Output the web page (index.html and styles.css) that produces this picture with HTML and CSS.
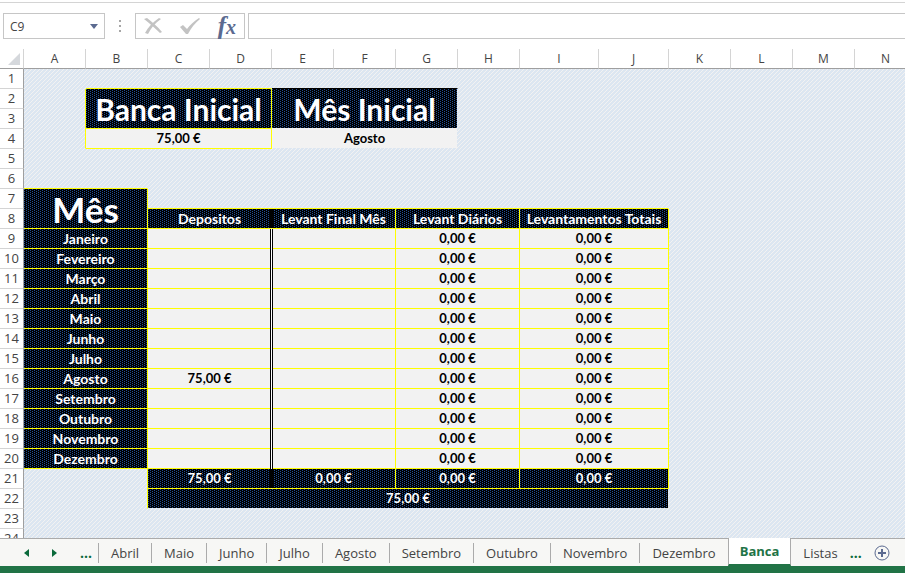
FILE: index.html
```html
<!DOCTYPE html>
<html lang="pt">
<head>
    <meta charset="UTF-8">
    <meta name="viewport" content="width=device-width, initial-scale=1.0">
    <title>Banca</title>
    <link rel="stylesheet" href="styles.css">
</head>
<body>
    <!-- Formula bar -->
    <header class="formula-bar">
        <div class="name-box">
            <input type="text" value="C9" aria-label="Name box">
            <button type="button" aria-label="Open names">
                <svg width="8" height="5" viewBox="0 0 8 5"><path d="M0 0h8L4 5z" fill="#5b6a90"/></svg>
            </button>
        </div>
        <svg class="grip" width="2" height="12" viewBox="0 0 2 12" fill="#a6a6a6"><path d="M0 0h2v2H0zM0 5h2v2H0zM0 10h2v2H0z"/></svg>
        <div class="formula-actions">
            <button type="button" aria-label="Cancel">
                <svg width="18" height="16" viewBox="0 0 18 16" fill="#c3c3c3"><path d="M0 1l3-1c5 4 10 8 15 14l-2 1C11 10 6 6 0 1z"/><path d="M15 0l2 1C11 5 7 10 4 16l-3-1C4 9 9 4 15 0z"/></svg>
            </button>
            <button type="button" aria-label="Enter">
                <svg width="20" height="16" viewBox="0 0 20 16"><path d="M0 9l3-2 4 4C10 7 14 3 19 0l1 1C15 5 11 10 8 16H6z" fill="#c3c3c3"/></svg>
            </button>
            <button type="button" class="fx" aria-label="Insert function">f<span>x</span></button>
        </div>
        <input type="text" class="formula-input" aria-label="Formula">
    </header>

    <!-- Sheet -->
    <main class="sheet">
        <table class="grid">
            <colgroup>
                <col class="col-head">
                <col><col><col><col><col><col><col><col>
                <col class="col-i"><col class="col-j">
                <col><col><col><col>
            </colgroup>
            <thead>
                <tr>
                    <th class="corner"><svg width="12" height="12" viewBox="0 0 12 12"><path d="M12 0v12H0z" fill="#d5d8dc"/></svg></th>
                    <th>A</th><th>B</th><th>C</th><th>D</th><th>E</th><th>F</th><th>G</th><th>H</th><th>I</th><th>J</th><th>K</th><th>L</th><th>M</th><th>N</th>
                </tr>
            </thead>
            <tbody>
                <tr><th>1</th><td></td><td class="line-b" colspan="3"></td><td class="navy-b" colspan="3"></td><td colspan="7"></td></tr>
                <tr><th>2</th><td class="line-r" rowspan="3"></td><td class="navy title line-b line-r" colspan="3" rowspan="2">Banca Inicial</td><td class="navy title light-b" colspan="3" rowspan="2">Mês Inicial</td><td colspan="7"></td></tr>
                <tr><th>3</th><td colspan="7"></td></tr>
                <tr><th>4</th><td class="light line-b line-r" colspan="3">75,00 €</td><td class="light" colspan="3">Agosto</td><td colspan="7"></td></tr>
                <tr><th>5</th><td colspan="14"></td></tr>
                <tr><th>6</th><td class="line-b" colspan="2"></td><td colspan="12"></td></tr>
                <tr><th>7</th><td class="navy month-title line-b line-r" colspan="2" rowspan="2">Mês</td><td class="line-b" colspan="8"></td><td colspan="4"></td></tr>
                <tr><th>8</th><td class="navy line-b split" colspan="2">Depositos</td><td class="navy line-b line-r" colspan="2">Levant Final Mês</td><td class="navy line-b line-r" colspan="2">Levant Diários</td><td class="navy line-b line-r" colspan="2">Levantamentos Totais</td><td colspan="4"></td></tr>
                <tr class="entry"><th>9</th><td class="navy" colspan="2">Janeiro</td><td class="light split" colspan="2"></td><td class="light" colspan="2"></td><td class="light" colspan="2">0,00 €</td><td class="light" colspan="2">0,00 €</td><td colspan="4"></td></tr>
                <tr class="entry"><th>10</th><td class="navy" colspan="2">Fevereiro</td><td class="light split" colspan="2"></td><td class="light" colspan="2"></td><td class="light" colspan="2">0,00 €</td><td class="light" colspan="2">0,00 €</td><td colspan="4"></td></tr>
                <tr class="entry"><th>11</th><td class="navy" colspan="2">Março</td><td class="light split" colspan="2"></td><td class="light" colspan="2"></td><td class="light" colspan="2">0,00 €</td><td class="light" colspan="2">0,00 €</td><td colspan="4"></td></tr>
                <tr class="entry"><th>12</th><td class="navy" colspan="2">Abril</td><td class="light split" colspan="2"></td><td class="light" colspan="2"></td><td class="light" colspan="2">0,00 €</td><td class="light" colspan="2">0,00 €</td><td colspan="4"></td></tr>
                <tr class="entry"><th>13</th><td class="navy" colspan="2">Maio</td><td class="light split" colspan="2"></td><td class="light" colspan="2"></td><td class="light" colspan="2">0,00 €</td><td class="light" colspan="2">0,00 €</td><td colspan="4"></td></tr>
                <tr class="entry"><th>14</th><td class="navy" colspan="2">Junho</td><td class="light split" colspan="2"></td><td class="light" colspan="2"></td><td class="light" colspan="2">0,00 €</td><td class="light" colspan="2">0,00 €</td><td colspan="4"></td></tr>
                <tr class="entry"><th>15</th><td class="navy" colspan="2">Julho</td><td class="light split" colspan="2"></td><td class="light" colspan="2"></td><td class="light" colspan="2">0,00 €</td><td class="light" colspan="2">0,00 €</td><td colspan="4"></td></tr>
                <tr class="entry"><th>16</th><td class="navy" colspan="2">Agosto</td><td class="light split" colspan="2">75,00 €</td><td class="light" colspan="2"></td><td class="light" colspan="2">0,00 €</td><td class="light" colspan="2">0,00 €</td><td colspan="4"></td></tr>
                <tr class="entry"><th>17</th><td class="navy" colspan="2">Setembro</td><td class="light split" colspan="2"></td><td class="light" colspan="2"></td><td class="light" colspan="2">0,00 €</td><td class="light" colspan="2">0,00 €</td><td colspan="4"></td></tr>
                <tr class="entry"><th>18</th><td class="navy" colspan="2">Outubro</td><td class="light split" colspan="2"></td><td class="light" colspan="2"></td><td class="light" colspan="2">0,00 €</td><td class="light" colspan="2">0,00 €</td><td colspan="4"></td></tr>
                <tr class="entry"><th>19</th><td class="navy" colspan="2">Novembro</td><td class="light split" colspan="2"></td><td class="light" colspan="2"></td><td class="light" colspan="2">0,00 €</td><td class="light" colspan="2">0,00 €</td><td colspan="4"></td></tr>
                <tr class="entry"><th>20</th><td class="navy" colspan="2">Dezembro</td><td class="light split" colspan="2"></td><td class="light" colspan="2"></td><td class="light" colspan="2">0,00 €</td><td class="light" colspan="2">0,00 €</td><td colspan="4"></td></tr>
                <tr class="totals"><th>21</th><td class="line-r" colspan="2" rowspan="2"></td><td class="navy line-b split" colspan="2">75,00 €</td><td class="navy line-b line-r" colspan="2">0,00 €</td><td class="navy line-b line-r" colspan="2">0,00 €</td><td class="navy line-b line-r" colspan="2">0,00 €</td><td colspan="4"></td></tr>
                <tr class="totals"><th>22</th><td class="navy" colspan="8">75,00 €</td><td colspan="4"></td></tr>
                <tr><th>23</th><td colspan="14"></td></tr>
                <tr><th>24</th><td colspan="14"></td></tr>
            </tbody>
        </table>
    </main>

    <!-- Sheet tabs -->
    <nav class="tab-bar">
        <div class="tab-scroll">
            <button type="button" aria-label="Previous sheet"><svg width="5" height="8" viewBox="0 0 5 8"><path d="M5 0v8L0 4z" fill="#0b6a3b"/></svg></button>
            <button type="button" aria-label="Next sheet"><svg width="5" height="8" viewBox="0 0 5 8"><path d="M0 0v8l5-4z" fill="#0b6a3b"/></svg></button>
            <button type="button" class="more">...</button>
        </div>
        <a href="#abril">Abril</a>
        <a href="#maio">Maio</a>
        <a href="#junho">Junho</a>
        <a href="#julho">Julho</a>
        <a href="#agosto">Agosto</a>
        <a href="#setembro">Setembro</a>
        <a href="#outubro">Outubro</a>
        <a href="#novembro">Novembro</a>
        <a href="#dezembro">Dezembro</a>
        <a href="#banca" class="active">Banca</a>
        <a href="#listas">Listas</a>
        <button type="button" class="more">...</button>
        <button type="button" class="add" aria-label="New sheet">
            <svg width="16" height="16" viewBox="0 0 16 16" fill="none" stroke="#5b6a90"><circle cx="8" cy="8" r="7"/><path d="M8 4v8M4 8h8" stroke-width="2"/></svg>
        </button>
    </nav>
    <footer class="status-bar"></footer>
</body>
</html>
```
FILE: styles.css
```css
* {
    margin: 0;
    padding: 0;
    box-sizing: border-box;
}

:root {
    --line: #ffff00;
    --light: #f2f2f2;
    --green: #217346;
    --ui-font: "Open Sans", "Noto Sans", sans-serif;
    --cell-font: Lato, "Open Sans", sans-serif;
    --hatch: url("data:image/svg+xml,%3Csvg xmlns='http://www.w3.org/2000/svg' width='4' height='4' shape-rendering='crispEdges'%3E%3Crect width='4' height='4' fill='%23dce6f1'/%3E%3Cpath d='M3 0h1v1H3zM2 1h1v1H2zM1 2h1v1H1zM0 3h1v1H0z' fill='%23f2f2f2'/%3E%3C/svg%3E");
    --dots: url("data:image/svg+xml,%3Csvg xmlns='http://www.w3.org/2000/svg' width='4' height='4' shape-rendering='crispEdges'%3E%3Crect width='4' height='4' fill='%23000'/%3E%3Cpath d='M0 0h1v1H0zM2 1h1v1H2zM0 2h1v1H0zM2 3h1v1H2z' fill='%231f4e96'/%3E%3C/svg%3E");
}

body {
    height: 100vh;
    display: flex;
    flex-direction: column;
    overflow: hidden;
    font-family: var(--ui-font);
    background: #fff;
}

button {
    border: 0;
    background: none;
    font-family: inherit;
}

/* Formula bar */
.formula-bar {
    flex: none;
    display: flex;
    align-items: center;
    margin-top: 2px;
    padding: 10px 0 10px 3px;
    border-top: 1px solid #d4d4d4;
}

.name-box,
.formula-actions,
.formula-input {
    height: 26px;
    border: 1px solid #c6c6c6;
    background: #fff;
}

.name-box {
    display: flex;
    width: 102px;
}

.name-box input {
    flex: 1;
    min-width: 0;
    padding-left: 6px;
    border: 0;
    font: 12px var(--ui-font);
    color: #444;
}

.name-box button {
    width: 20px;
    padding-bottom: 4px;
}

.grip {
    margin: 0 14px;
}

.formula-actions {
    display: flex;
    align-items: center;
    justify-content: space-between;
    width: 110px;
    padding: 0 8px;
    margin-right: 3px;
}

.formula-actions button {
    display: flex;
}

.formula-actions .fx {
    display: block;
    font: italic bold 25px/24px "Liberation Serif", serif;
    color: #5b6a90;
}

.fx span {
    font-size: 20px;
}

.formula-input {
    flex: 1;
    min-width: 0;
    border-right: 0;
    padding: 0 8px;
    font: 12px var(--ui-font);
}

/* Sheet */
.sheet {
    flex: 1;
    min-height: 0;
    overflow: hidden;
    background: var(--hatch);
}

.grid {
    width: 917px;
    table-layout: fixed;
    border-collapse: separate;
    border-spacing: 0;
}

.grid col {
    width: 62px;
}

.grid .col-head {
    width: 24px;
}

.grid .col-i {
    width: 79px;
}

.grid .col-j {
    width: 70px;
}

.grid th {
    height: 20px;
    background: #fff;
    font-size: 12px;
    line-height: 19px;
    font-weight: 400;
    color: #444;
    white-space: nowrap;
}

.grid thead th {
    border-right: 1px solid #d4d4d4;
    border-bottom: 1px solid #9f9f9f;
}

.grid .corner {
    padding-left: 8px;
}

.corner svg {
    display: block;
}

.grid tbody th {
    border-right: 1px solid #9f9f9f;
    border-bottom: 1px solid #d4d4d4;
    font-size: 13px;
}

.grid td {
    height: 20px;
    border-right: 1px solid transparent;
    border-bottom: 1px solid transparent;
    background-clip: padding-box;
    font-family: var(--cell-font);
    font-size: 13px;
    line-height: 19px;
    font-weight: 700;
    text-align: center;
    white-space: nowrap;
    color: #000;
}

.grid .navy {
    background-image: var(--dots);
    font-size: 14px;
    color: #fff;
}

.grid .totals .navy {
    font-size: 13px;
}

.grid .light {
    background-color: var(--light);
}

.grid .title {
    font-size: 30px;
    line-height: 38px;
}

.grid .month-title {
    font-size: 35px;
    line-height: 38px;
}

/* Cell borders */
.grid .line-r,
.grid .entry td:not(:last-child) {
    border-right-color: var(--line);
}

.grid .line-b,
.grid .entry td:not(:last-child) {
    border-bottom-color: var(--line);
}

.grid .navy-b {
    border-bottom-color: #000;
}

.grid .light-b {
    border-bottom-color: var(--light);
}

/* Double line between deposits and withdrawals */
.grid .split {
    position: relative;
}

.split::after {
    content: "";
    position: absolute;
    top: 0;
    right: -2px;
    bottom: -1px;
    width: 1px;
    border: solid #000;
    border-width: 0 1px;
    background: #fff;
}

.navy.split::after {
    bottom: 0;
    background: #000;
}

/* Sheet tabs */
.tab-bar {
    flex: none;
    display: flex;
    align-items: center;
    height: 28px;
    border-top: 1px solid #ababab;
    background: #f7f7f5;
}

.tab-scroll {
    display: flex;
    align-items: center;
    width: 98px;
    padding-left: 24px;
    gap: 23px;
}

.tab-bar button {
    display: flex;
}

.tab-bar a {
    padding: 0 12px;
    border-left: 1px solid #ababab;
    font-size: 13px;
    line-height: 20px;
    color: #444;
    text-decoration: none;
}

.tab-bar .active {
    align-self: stretch;
    margin-top: -1px;
    padding: 0 11px;
    border-right: 1px solid #ababab;
    border-bottom: 2px solid var(--green);
    background: #fff;
    line-height: 26px;
    font-weight: 700;
    color: var(--green);
}

.tab-bar .active + a {
    border-left: 0;
}

.tab-bar .more {
    font-size: 14px;
    line-height: 20px;
    font-weight: 700;
    color: #0b6a3b;
}

.tab-bar .add {
    margin-left: 12px;
}

.status-bar {
    flex: none;
    height: 7px;
    background: var(--green);
}
```
